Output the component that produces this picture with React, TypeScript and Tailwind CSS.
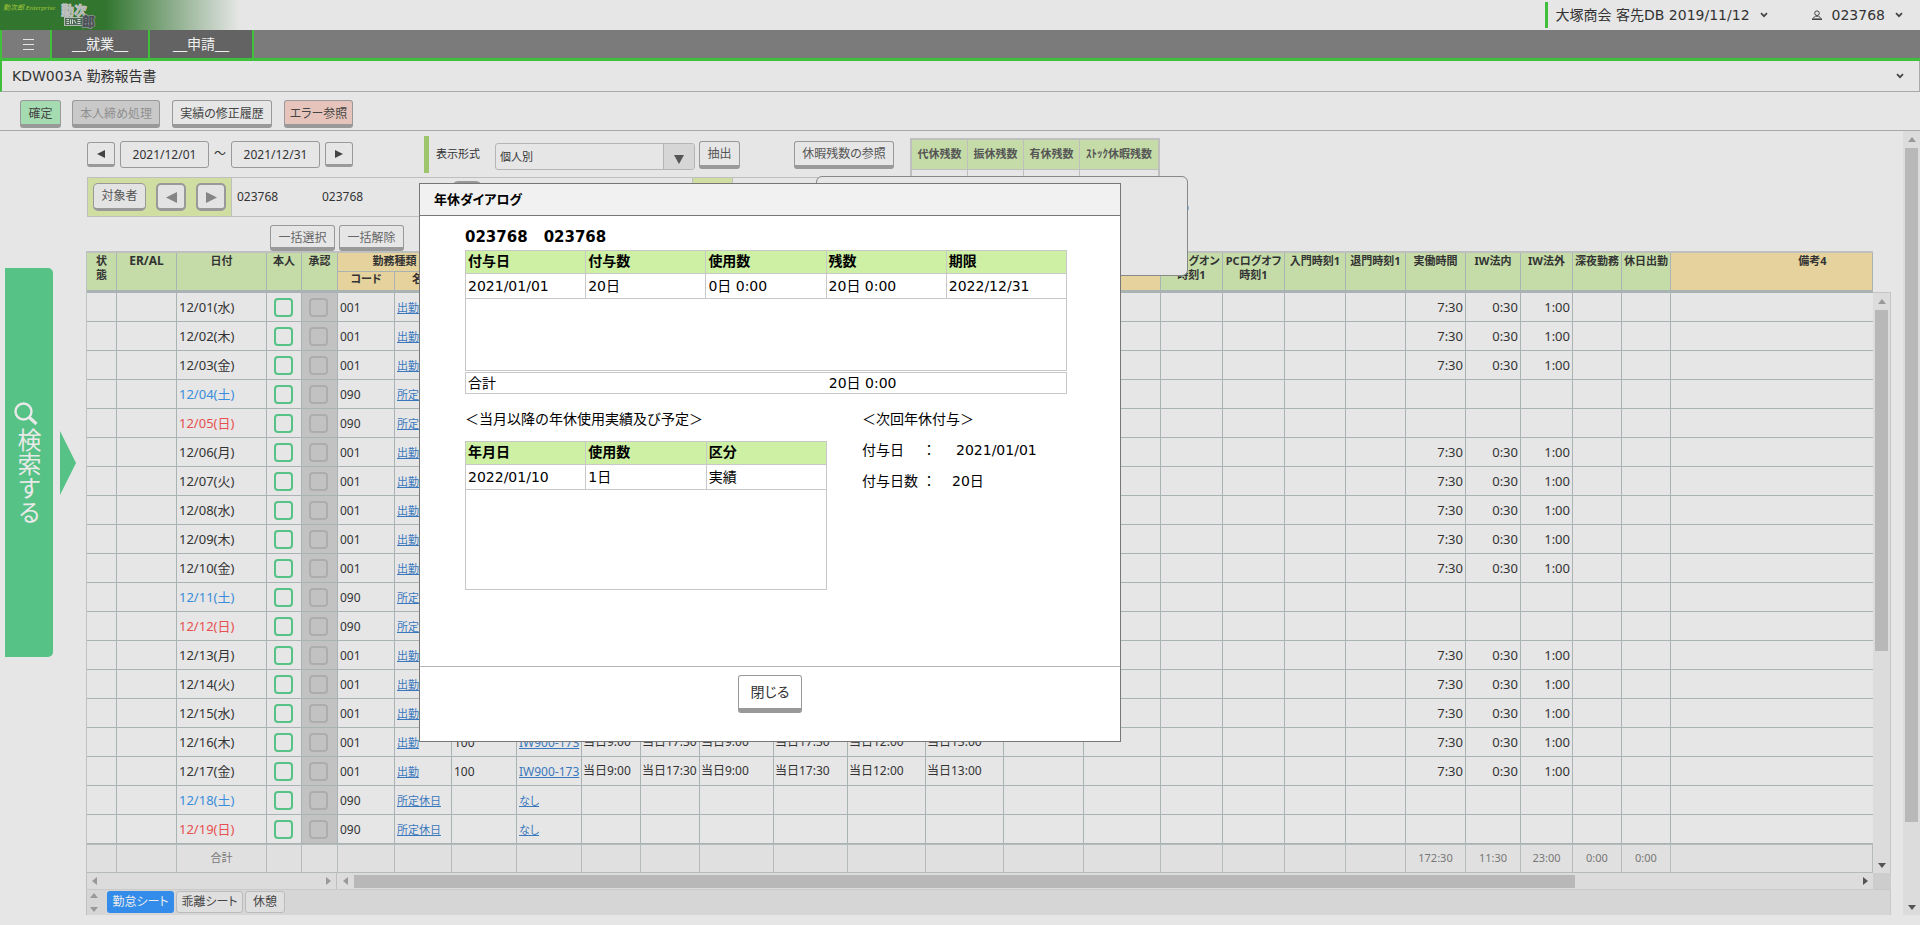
import type { ReactNode } from "react";

const cn = (...parts: (string | false | undefined)[]) => parts.filter(Boolean).join(" ");

const LATIN = "font-['DejaVu_Sans','Noto_Sans_CJK_JP',sans-serif]";
const SMALL = "font-['Noto_Sans','Noto_Sans_CJK_JP',sans-serif]";

type Direction = "up" | "down" | "left" | "right";

const TRIANGLES: Record<Direction, string> = {
  up: "0,6 4,1 8,6",
  down: "0,2 4,7 8,2",
  left: "6,0 1,4 6,8",
  right: "2,0 7,4 2,8",
};

function Triangle({ dir, className = "size-2 text-[#999]" }: { dir: Direction; className?: string }) {
  return (
    <svg viewBox="0 0 8 8" className={cn("shrink-0", className)} fill="currentColor" aria-hidden="true">
      <polygon points={TRIANGLES[dir]} />
    </svg>
  );
}

function Chevron() {
  return (
    <svg viewBox="0 0 8 6" className="h-1.5 w-2 shrink-0" fill="none" stroke="#444" strokeWidth="1.7" aria-hidden="true">
      <path d="M1 1.2 4 4.2 7 1.2" />
    </svg>
  );
}

function PushButton({
  children,
  className = "",
  label,
  disabled,
}: {
  children: ReactNode;
  className?: string;
  label?: string;
  disabled?: boolean;
}) {
  return (
    <button
      type="button"
      aria-label={label}
      disabled={disabled}
      className={cn(
        "flex h-7 shrink-0 items-center justify-center rounded-[3px] border border-b-4 border-[#999] text-xs whitespace-nowrap [font-feature-settings:'palt']",
        className,
      )}
    >
      {children}
    </button>
  );
}

function TopBar() {
  return (
    <header className="flex h-[30px] items-center bg-[linear-gradient(90deg,#31752f_0,#31752f_105px,#e6e6e6_240px)] text-sm text-[#333]">
      <span className="w-[57px] self-start pt-1 pl-[3px] font-['Liberation_Serif','Noto_Sans_CJK_JP',serif] text-[7px] leading-2 whitespace-nowrap text-[#a5c93a] italic">
        勤次郎 Enterprise
      </span>
      <svg viewBox="0 0 40 30" className="h-[30px] w-10 shrink-0 overflow-visible" role="img" aria-label="勤次郎">
        <rect x="7.5" y="17.5" width="20" height="8" fill="#4f6a55" stroke="#b5b9b6" />
        <path d="M9.5 19.5h2.5M9.5 21.5h2.5M9.5 23.5h2.5M13.5 19.5v4.5M15.5 19.5v4.5M17 20l2 3.5M20.5 19.5h3M20.5 21.5h3M20.5 23.5h3" stroke="#d5d7d6" fill="none" />
        <text x="4" y="15" fontSize="13" fontWeight="900" fontFamily="Noto Sans CJK JP" fill="#b4b7b5" stroke="#c8cac9" strokeWidth="0.6">
          勤次
        </text>
        <text
          x="25"
          y="26"
          fontSize="13"
          fontWeight="900"
          fontFamily="Noto Sans CJK JP"
          fill="#4c5158"
          stroke="#8f9496"
          strokeWidth="1.4"
          paintOrder="stroke"
        >
          郎
        </text>
      </svg>
      <div className="ml-auto flex h-[26px] items-center border-l-[3px] border-[#40bf3d] pl-2">
        <button type="button" className="flex items-center gap-2.5 whitespace-nowrap">
          大塚商会 客先DB 2019/11/12
          <Chevron />
        </button>
        <button type="button" className="mr-[17px] ml-11 flex items-center gap-2.5">
          <svg viewBox="0 0 10 10" className="size-2.5" fill="none" stroke="#444" aria-hidden="true">
            <circle cx="5" cy="3.2" r="2.3" />
            <path d="M1.2 8 3.5 6.2h3L8.8 8" />
            <path d="M0 9.2h10" strokeWidth="1.6" />
          </svg>
          023768
          <Chevron />
        </button>
      </div>
    </header>
  );
}

function NavBar() {
  return (
    <nav className="flex h-[31px] border-b-[3px] border-l-2 border-[#40bf3d] bg-[#7b7b7b] text-sm text-[#f0f0f0]">
      <button type="button" aria-label="メニュー" className="flex w-[50px] items-center justify-center border-r-2 border-[#40bf3d]">
        <svg viewBox="0 0 11 11" className="mt-px ml-1 size-[11px]" stroke="#e6e6e6" aria-hidden="true">
          <path d="M0 .5h11M0 5.5h11M0 10.5h11" />
        </svg>
      </button>
      <button type="button" className="w-[98px] border-r-2 border-[#40bf3d] bg-[#636363]">
        __就業__
      </button>
      <button type="button" className="w-[104px] border-r-2 border-[#40bf3d] bg-[#636363]">
        __申請__
      </button>
    </nav>
  );
}

function Toolbar() {
  return (
    <div className="flex h-[39px] items-end gap-[11px] border-b border-[#a9a9a9] pb-0.5 pl-5 text-[#444]">
      <PushButton className="w-[41px] bg-[#a5dbb0] pt-0.5">確定</PushButton>
      <PushButton className="w-[88px] bg-[#c9c9c9] pt-0.5 text-[#8f8f8f]" disabled>
        本人締め処理
      </PushButton>
      <PushButton className="ml-px w-[100px] pt-0.5">実績の修正履歴</PushButton>
      <PushButton className="ml-px w-[69px] bg-[#e6c4bb] pt-0.5">エラー参照</PushButton>
    </div>
  );
}

function SearchTab() {
  return (
    <aside className="flex w-[86px] shrink-0 items-start pt-[137px] pl-[5px]">
      <button
        type="button"
        className="flex h-[389px] w-12 shrink-0 flex-col items-center justify-center gap-0.5 rounded-r-[5px] bg-[#56c285] pr-1 text-[#e9e9e9]"
      >
        <svg viewBox="0 0 24 24" className="mr-0.5 size-6 shrink-0" fill="none" stroke="currentColor" aria-hidden="true">
          <circle cx="9.5" cy="9.5" r="8" strokeWidth="2.4" />
          <path d="m15.5 15.5 7 6.5" strokeWidth="3.2" />
        </svg>
        <span className="text-2xl leading-6 [writing-mode:vertical-rl]">検索する</span>
      </button>
      <svg viewBox="0 0 16 64" className="mt-[163px] ml-[7px] h-16 w-4" fill="#56c285" aria-hidden="true">
        <polygon points="0,0 16,32 0,64" />
      </svg>
    </aside>
  );
}

function PeriodRow() {
  return (
    <div className={cn("flex h-[46px] items-center text-xs text-[#333]", SMALL)}>
      <PushButton label="前の期間" className="h-[25px] w-7 border-b-[3px]">
        <svg viewBox="0 0 8 8" className="mt-0.5 size-2" fill="#444" aria-hidden="true">
          <polygon points="8,0 0,4 8,8" />
        </svg>
      </PushButton>
      <input
        aria-label="開始日"
        defaultValue="2021/12/01"
        className="ml-[5px] h-[27px] w-[89px] rounded-[3px] border border-[#999] text-center"
      />
      <span className="w-[22px] text-center">～</span>
      <input
        aria-label="終了日"
        defaultValue="2021/12/31"
        className="h-[27px] w-[89px] rounded-[3px] border border-[#999] text-center"
      />
      <PushButton label="次の期間" className="ml-[5px] h-[25px] w-7 border-b-[3px]">
        <svg viewBox="0 0 8 8" className="mt-0.5 size-2" fill="#444" aria-hidden="true">
          <polygon points="0,0 8,4 0,8" />
        </svg>
      </PushButton>
      <label htmlFor="format" className="ml-[71px] flex h-[37px] w-[71px] items-center border-l-[5px] border-[#9ec46c] pl-[7px] text-[11px] whitespace-nowrap">
        表示形式
      </label>
      <div className="mt-1 flex h-[27px] w-[200px] overflow-hidden rounded-[3px] border border-[#b5b5b5]">
        <select id="format" className="min-w-0 flex-1 appearance-none border-r border-[#b5b5b5] pt-0.5 pl-1 text-[11px]">
          <option>個人別</option>
        </select>
        <span className="flex w-[30px] items-center justify-center bg-[#d6d6d6]">
          <svg viewBox="0 0 10 10" className="mt-1.5 size-2.5" fill="#555" aria-hidden="true">
            <polygon points="0,1 10,1 5,10" />
          </svg>
        </span>
      </div>
      <PushButton className="mt-0.5 ml-1 w-[41px] text-[#555]">抽出</PushButton>
      <PushButton className="mt-0.5 ml-[54px] w-[100px] text-[#555]">休暇残数の参照</PushButton>
      <table className="mt-[7px] ml-4 w-[250px] shrink-0 table-fixed border-separate border-spacing-0 self-start border-2 border-b-0 border-[#bfbfbf] text-[11px]">
        <colgroup>
          <col className="w-14" />
          <col className="w-14" />
          <col className="w-14" />
          <col />
        </colgroup>
        <thead>
          <tr className="h-[30px] bg-[#c5dca8]">
            {["代休残数", "振休残数", "有休残数", "ｽﾄｯｸ休暇残数"].map((h) => (
              <th key={h} className="border-r border-b border-[#bfbfbf] p-0 font-bold text-[#555] last:border-r-0">
                {h}
              </th>
            ))}
          </tr>
        </thead>
        <tbody>
          <tr className="h-1.5">
            {[0, 1, 2, 3].map((i) => (
              <td key={i} className="border-r border-[#bfbfbf] p-0 last:border-r-0" />
            ))}
          </tr>
        </tbody>
      </table>
    </div>
  );
}

function PersonRow() {
  return (
    <div className={cn("flex h-10 w-[760px] border border-[#bfbfbf] text-xs text-[#333]", SMALL)}>
      <div className="flex w-36 shrink-0 items-center border-r border-[#bfbfbf] bg-[#d0dfa1] pl-[5px]">
        <PushButton className="w-[53px] rounded-[5px] border-b-[3px] bg-[#e3e3e3] text-[#555]">対象者</PushButton>
        <PushButton label="前の対象者" className="ml-2.5 w-[30px] rounded-[5px] border-2 border-b-[3px] bg-[#e3e3e3]">
          <svg viewBox="0 0 10 10" className="mt-0.5 size-[11px]" fill="#858585" aria-hidden="true">
            <polygon points="10,0 0,5 10,10" />
          </svg>
        </PushButton>
        <PushButton label="次の対象者" className="ml-2.5 w-[30px] rounded-[5px] border-2 border-b-[3px] bg-[#e3e3e3]">
          <svg viewBox="0 0 10 10" className="mt-0.5 size-[11px]" fill="#858585" aria-hidden="true">
            <polygon points="0,0 10,5 0,10" />
          </svg>
        </PushButton>
      </div>
      <span className="w-[85px] self-center pl-[5px]">023768</span>
      <span className="w-[135px] self-center pl-[5px]">023768</span>
      <span className="mt-[3px] h-7 w-[30px] rounded-[6px] border-2 border-[#999]" />
      <span className="ml-[210px] w-[41px] border-x border-[#bfbfbf] bg-[#d0dfa1]" />
    </div>
  );
}

type Row = { date: string; kind: "work" | "sat" | "sun"; shift?: string; times?: string[] };

const TIMES = ["当日9:00", "当日17:30", "当日9:00", "当日17:30", "当日12:00", "当日13:00"];

const ROWS: Row[] = [
  { date: "12/01(水)", kind: "work" },
  { date: "12/02(木)", kind: "work" },
  { date: "12/03(金)", kind: "work" },
  { date: "12/04(土)", kind: "sat" },
  { date: "12/05(日)", kind: "sun" },
  { date: "12/06(月)", kind: "work" },
  { date: "12/07(火)", kind: "work" },
  { date: "12/08(水)", kind: "work" },
  { date: "12/09(木)", kind: "work" },
  { date: "12/10(金)", kind: "work" },
  { date: "12/11(土)", kind: "sat" },
  { date: "12/12(日)", kind: "sun" },
  { date: "12/13(月)", kind: "work" },
  { date: "12/14(火)", kind: "work" },
  { date: "12/15(水)", kind: "work" },
  { date: "12/16(木)", kind: "work", shift: "IW900-173", times: TIMES },
  { date: "12/17(金)", kind: "work", shift: "IW900-173", times: TIMES },
  { date: "12/18(土)", kind: "sat", shift: "なし" },
  { date: "12/19(日)", kind: "sun", shift: "なし" },
];

const DATE_COLOR = { work: "text-[#333]", sat: "text-[#3a8ddb]", sun: "text-[#e85050]" };

const COLUMNS = [
  "w-[30px]", "w-[60px]", "w-[90px]", "w-[35px]", "w-[36px]", "w-[57px]", "w-[57px]",
  "w-[65px]", "w-[65px]", "w-[59px]", "w-[59px]", "w-[74px]", "w-[74px]", "w-[78px]",
  "w-[78px]", "w-[80px]", "w-[77px]", "w-[62px]", "w-[62px]", "w-[61px]", "w-[60px]",
  "w-[60px]", "w-[55px]", "w-[52px]", "w-[49px]", "w-[49px]", "w-auto",
];

const CELL = "overflow-hidden border-r border-b border-[#a9b3b3] p-0 whitespace-nowrap";
const HEAD = "border-r border-[#a9b3b3] p-0 font-bold leading-[14px] [font-feature-settings:'palt']";

function Head({
  children,
  color = "green",
  rows = true,
  span,
}: {
  children?: ReactNode;
  color?: "green" | "tan";
  rows?: boolean;
  span?: number;
}) {
  return (
    <th
      rowSpan={rows ? 2 : 1}
      colSpan={span}
      className={cn(
        HEAD,
        "pt-px align-top",
        color === "green" ? "bg-[#c5dca8]" : "bg-[#e5d29c]",
        rows ? "border-b-3" : "border-b",
      )}
    >
      {children}
    </th>
  );
}

function TimeSheet() {
  return (
    <table className={cn("min-w-0 flex-1 table-fixed border-separate border-spacing-0 border-t-2 border-[#bfc1c1] text-xs text-[#333]", SMALL)}>
      <colgroup>
        {COLUMNS.map((w, i) => (
          <col key={i} className={w} />
        ))}
      </colgroup>
      <thead className="text-[11px]">
        <tr className="h-[19px]">
          <Head>
            状<br />態
          </Head>
          <Head>
            <span className="text-xs leading-[14px]">ER/AL</span>
          </Head>
          <Head>日付</Head>
          <Head>本人</Head>
          <Head>承認</Head>
          <Head color="tan" rows={false} span={2}>
            勤務種類
          </Head>
          {[7, 8, 9, 10, 11, 12, 13, 14].map((i) => (
            <Head key={i} />
          ))}
          <Head color="tan" />
          <Head color="tan" />
          <Head>
            PCログオン
            <br />
            時刻1
          </Head>
          <Head>
            PCログオフ
            <br />
            時刻1
          </Head>
          <Head>入門時刻1</Head>
          <Head>退門時刻1</Head>
          <Head>実働時間</Head>
          <Head>IW法内</Head>
          <Head>IW法外</Head>
          <Head>深夜勤務</Head>
          <Head>休日出勤</Head>
          <th rowSpan={2} className={cn(HEAD, "border-b-3 bg-[#e5d29c] pt-px pl-[82px] align-top")}>
            備考4
          </th>
        </tr>
        <tr className="h-[21px]">
          <th className={cn(HEAD, "border-b-3 bg-[#e5d29c] align-top")}>コード</th>
          <th className={cn(HEAD, "border-b-3 bg-[#e5d29c] align-top")}>名称</th>
        </tr>
      </thead>
      <tbody>
        {ROWS.map(({ date, kind, shift, times }) => {
          const work = kind === "work";
          return (
            <tr key={date} className="h-[29px]">
              <td className={CELL} />
              <td className={CELL} />
              <td className={cn(CELL, "pl-0.5 text-[13px] leading-4", DATE_COLOR[kind])}>{date}</td>
              <td className={CELL}>
                <input
                  type="checkbox"
                  aria-label={`${date} 本人`}
                  className="ml-[7px] block size-[19px] appearance-none rounded border-2 border-[#56c285]"
                />
              </td>
              <td className={cn(CELL, "bg-[#c2c2c2]")}>
                <input
                  type="checkbox"
                  disabled
                  aria-label={`${date} 承認`}
                  className="ml-[7px] block size-[19px] appearance-none rounded border-2 border-[#adadad]"
                />
              </td>
              <td className={cn(CELL, "pt-px pl-0.5")}>{work ? "001" : "090"}</td>
              <td className={cn(CELL, "pt-0.5 pl-0.5 text-[11px]")}>
                <a href="#kind" className="text-[#3a78bd] underline">
                  {work ? "出勤" : "所定休日"}
                </a>
              </td>
              <td className={cn(CELL, "pt-px pl-0.5")}>{times && "100"}</td>
              <td className={cn(CELL, "pt-0.5 pl-0.5")}>
                {shift && (
                  <a href="#shift" className={cn("text-[#3a78bd] underline", !work && "text-[11px] [font-feature-settings:'palt']")}>
                    {shift}
                  </a>
                )}
              </td>
              {TIMES.map((_, i) => (
                <td key={i} className={cn(CELL, "pl-px")}>
                  {times?.[i]}
                </td>
              ))}
              {[15, 16, 17, 18, 19, 20].map((i) => (
                <td key={i} className={CELL} />
              ))}
              <td className={cn(CELL, "pt-px pr-0.5 text-right text-[13px]")}>{work && "7:30"}</td>
              <td className={cn(CELL, "pt-px pr-0.5 text-right text-[13px]")}>{work && "0:30"}</td>
              <td className={cn(CELL, "pt-px pr-0.5 text-right text-[13px]")}>{work && "1:00"}</td>
              <td className={CELL} />
              <td className={CELL} />
              <td className={cn(CELL, "border-r-0")} />
            </tr>
          );
        })}
      </tbody>
      <tfoot>
        <tr className="h-[29px] bg-[#e0e0e0] text-[11px] text-[#777]">
          {COLUMNS.map((_, i) => (
            <td key={i} className="border-t border-r border-b border-[#b5bbbb] p-0 text-center">
              {i === 2 && "合計"}
              {i === 21 && "172:30"}
              {i === 22 && "11:30"}
              {i === 23 && "23:00"}
              {(i === 24 || i === 25) && "0:00"}
            </td>
          ))}
        </tr>
      </tfoot>
    </table>
  );
}

function SheetArea() {
  return (
    <div className="flex flex-col border-l border-[#bfc1c1]">
      <div className="flex">
        <TimeSheet />
        <div className="mt-[41px] flex w-[18px] shrink-0 flex-col items-center border-t border-r border-[#c4c4c4] bg-[#dcdcdc]">
          <div className="flex h-[17px] shrink-0 items-center">
            <Triangle dir="up" />
          </div>
          <div className="h-[341px] w-[13px] bg-[#b8b8b8]" />
          <div className="mt-auto flex h-[17px] items-center">
            <Triangle dir="down" className="size-2 text-[#555]" />
          </div>
        </div>
      </div>
      <div className="flex h-4 bg-[#dcdcdc]">
        <div className="flex w-[250px] shrink-0 items-center justify-between border-r border-[#bfbfbf] px-1">
          <Triangle dir="left" />
          <Triangle dir="right" />
        </div>
        <div className="flex min-w-0 flex-1 items-center">
          <span className="flex w-[17px] justify-center">
            <Triangle dir="left" />
          </span>
          <span className="h-[13px] w-[79.5%] bg-[#b8b8b8]" />
          <span className="ml-auto flex w-[17px] justify-center">
            <Triangle dir="right" className="size-2 text-[#555]" />
          </span>
        </div>
        <div className="w-[18px] shrink-0 bg-[#cdcdcd]" />
      </div>
      <div className="flex h-[26px] items-start gap-0.5 border-t border-r border-[#c9c9c9] bg-[#d6d6d6] text-xs text-[#444] [font-feature-settings:'palt']">
        <div className="mr-1 flex h-full w-[14px] flex-col items-center justify-between py-0.5">
          <Triangle dir="up" />
          <Triangle dir="down" />
        </div>
        <button type="button" className="mt-px h-[22px] w-[67px] rounded-[3px] bg-[#338cea] text-[#ececec]">
          勤怠シート
        </button>
        <button type="button" className="mt-px h-[22px] w-[67px] rounded-[3px] border border-[#bbb] bg-[#dfdfdf]">
          乖離シート
        </button>
        <button type="button" className="mt-px h-[22px] w-10 rounded-[3px] border border-[#bbb] bg-[#dfdfdf]">
          休憩
        </button>
      </div>
    </div>
  );
}

const D_LINE = "border-[#c8c8c8]";

function GridTable({ heads, cells, rest }: { heads: string[]; cells: string[]; rest: string }) {
  return (
    <table className={cn("w-full table-fixed border-separate border-spacing-0 border-t border-l text-left", D_LINE)}>
      <thead>
        <tr className="h-[23px] bg-[#cdf0a5]">
          {heads.map((h) => (
            <th key={h} className={cn("border-r border-b p-0 pb-0.5 pl-0.5 font-bold", D_LINE)}>
              {h}
            </th>
          ))}
        </tr>
      </thead>
      <tbody>
        <tr className="h-[25px]">
          {cells.map((c, i) => (
            <td key={i} className={cn("border-r border-b py-0 pr-0 pl-0.5", D_LINE)}>
              {c}
            </td>
          ))}
        </tr>
        <tr className={rest}>
          <td colSpan={cells.length} className={cn("border-r border-b p-0", D_LINE)} />
        </tr>
      </tbody>
    </table>
  );
}

function LeaveDialog() {
  return (
    <section
      role="dialog"
      aria-labelledby="dialog-title"
      className="absolute top-[183px] left-[419px] flex h-[559px] w-[702px] flex-col border border-[#777] bg-white text-sm leading-5 text-black"
    >
      <h2 id="dialog-title" className="flex h-8 shrink-0 items-center border-b border-[#777] bg-[#f1f1f1] pl-[14px] text-[13px] font-bold [font-feature-settings:'palt']">
        年休ダイアログ
      </h2>
      <div className="flex flex-1 flex-col pt-[11px] pr-[53px] pl-[45px]">
        <p className="flex gap-4 text-[15px] font-bold">
          <span>023768</span>
          <span>023768</span>
        </p>
        <div className="mt-[3px]">
          <GridTable
            heads={["付与日", "付与数", "使用数", "残数", "期限"]}
            cells={["2021/01/01", "20日", "0日 0:00", "20日 0:00", "2022/12/31"]}
            rest="h-[72px]"
          />
        </div>
        <div className={cn("mt-px grid h-[22px] grid-cols-5 items-center border pl-0.5", D_LINE)}>
          <span>合計</span>
          <span className="col-start-4 pl-0.5">20日 0:00</span>
        </div>
        <div className="mt-[15px] flex">
          <div className="w-[362px]">
            <h3>＜当月以降の年休使用実績及び予定＞</h3>
            <div className="mt-3">
              <GridTable heads={["年月日", "使用数", "区分"]} cells={["2022/01/10", "1日", "実績"]} rest="h-[100px]" />
            </div>
          </div>
          <div className="ml-[35px]">
            <h3>＜次回年休付与＞</h3>
            <dl className="mt-[11px] grid grid-cols-[60px_1fr] gap-y-[11px]">
              <dt>付与日</dt>
              <dd className="flex gap-5">
                <span>：</span>2021/01/01
              </dd>
              <dt>付与日数</dt>
              <dd className="flex gap-4">
                <span>：</span>20日
              </dd>
            </dl>
          </div>
        </div>
      </div>
      <div className="flex h-[75px] shrink-0 justify-center border-t border-[#b5b5b5] pt-2">
        <button
          type="button"
          className="h-[38px] w-16 rounded-[3px] border border-b-[5px] border-[#999] text-[#333] [font-feature-settings:'palt']"
        >
          閉じる
        </button>
      </div>
    </section>
  );
}

export default function App() {
  return (
    <div className={cn("relative min-h-screen bg-[#e6e6e6]", LATIN)}>
      <TopBar />
      <NavBar />
      <div className="flex h-[31px] items-center justify-between border-r border-b border-l-2 border-r-[#a9a9a9] border-b-[#a9a9a9] border-l-[#40bf3d] pr-[15px] pl-2.5 text-sm text-[#333]">
        <h1>KDW003A 勤務報告書</h1>
        <button type="button" aria-label="開く">
          <Chevron />
        </button>
      </div>
      <Toolbar />
      <div className="flex">
        <SearchTab />
        <main className="mr-3 min-w-0 flex-1">
          <div className="pl-px">
            <PeriodRow />
            <PersonRow />
            <div className={cn("flex h-[34px] items-end gap-1 pl-[183px] text-[#666]", SMALL)}>
              <PushButton className="h-[26px] w-[65px] border-b-2 pt-0.5">一括選択</PushButton>
              <PushButton className="h-[26px] w-[65px] border-b-2 pt-0.5">一括解除</PushButton>
            </div>
          </div>
          <SheetArea />
        </main>
        <div className="flex w-[17px] shrink-0 flex-col items-center bg-[#dcdcdc]">
          <div className="flex h-[17px] items-center">
            <Triangle dir="up" />
          </div>
          <div className="h-[674px] w-[13px] bg-[#b8b8b8]" />
          <div className="mt-auto flex h-[17px] items-center">
            <Triangle dir="down" className="size-2 text-[#555]" />
          </div>
        </div>
      </div>
      <span className="absolute top-[205px] left-[1183px] size-1.5 rounded-full bg-[#7ab8e0]" />
      <div className="absolute top-[176px] left-[816px] h-[100px] w-[372px] rounded-md border border-[#888] bg-[#e6e6e6]" />
      <LeaveDialog />
    </div>
  );
}
